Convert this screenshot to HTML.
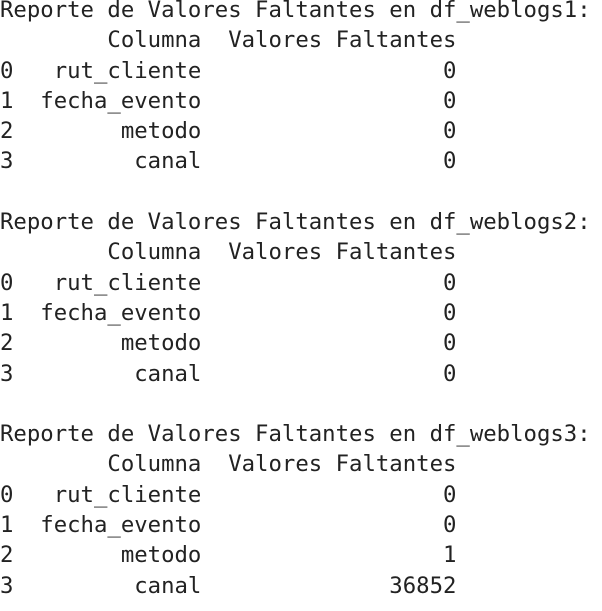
<!DOCTYPE html>
<html><head><meta charset="utf-8"><style>
html,body{margin:0;padding:0;background:#fff;width:602px;height:611px;overflow:hidden}
pre{margin:0;padding:0 0 0 0;position:relative;top:-5px;font-family:"DejaVu Sans Mono","Liberation Mono",monospace;font-size:22.3px;line-height:30.3px;color:#222}
</style></head><body><pre>Reporte de Valores Faltantes en df_weblogs1:
        Columna  Valores Faltantes
0   rut_cliente                  0
1  fecha_evento                  0
2        metodo                  0
3         canal                  0

Reporte de Valores Faltantes en df_weblogs2:
        Columna  Valores Faltantes
0   rut_cliente                  0
1  fecha_evento                  0
2        metodo                  0
3         canal                  0

Reporte de Valores Faltantes en df_weblogs3:
        Columna  Valores Faltantes
0   rut_cliente                  0
1  fecha_evento                  0
2        metodo                  1
3         canal              36852</pre></body></html>
